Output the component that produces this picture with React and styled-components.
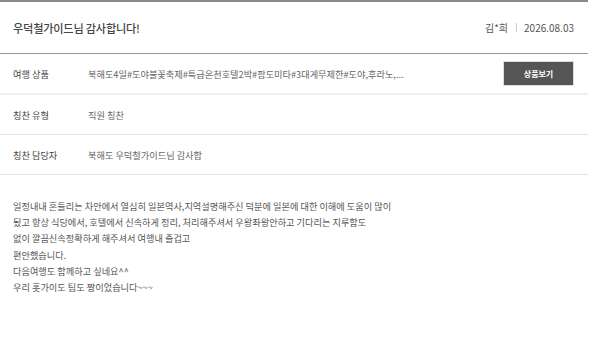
import React from "react";
import styled, { createGlobalStyle } from "styled-components";

const Global = createGlobalStyle`
  html, body { margin: 0; padding: 0; background: #fff; }
  body { font-family: "Noto Sans CJK KR", "Noto Sans", sans-serif; }
`;

const Wrap = styled.div`
  width: 588px;
  border-top: 2px solid #8a8a8a;
`;

const Header = styled.div`
  height: 51px;
  display: flex;
  align-items: center;
  justify-content: space-between;
  padding: 0 14px 0 13px;
  border-bottom: 1px solid #9a9a9a;
`;

const Title = styled.h1`
  margin: 0;
  font-size: 11.2px;
  font-weight: 500;
  color: #444;
  letter-spacing: -0.02em;
`;

const Meta = styled.div`
  display: flex;
  align-items: center;
  font-size: 10px;
  color: #555;
`;

const Sep = styled.span`
  width: 1px;
  height: 9px;
  background: #ccc;
  margin: 0 7px 0 8px;
`;

const Row = styled.div`
  height: 39px;
  display: flex;
  align-items: center;
  padding: 0 14px 0 13px;
  border-bottom: ${(p) => (p.$thick ? "2px solid #eeeeee" : "1px solid #e2e2e2")};
`;

const Label = styled.div`
  width: 75px;
  flex: none;
  font-size: 9.2px;
  color: #444;
`;

const Value = styled.div`
  flex: 1;
  font-size: 9.2px;
  color: #666;
  white-space: nowrap;
`;

const Button = styled.button`
  width: 71px;
  height: 25px;
  background: #555;
  border: 1px solid #ddd;
  color: #fff;
  font-family: inherit;
  font-size: 8px;
  font-weight: 700;
  padding: 0;
`;

const Body = styled.div`
  padding: 23px 13px;
  font-size: 9.2px;
  line-height: 16.2px;
  color: #555;
`;

const Line = styled.p`
  margin: 0;
`;

const lines = [
  "일정내내 흔들리는 차안에서 열심히 일본역사,지역설명해주신 덕분에 일본에 대한 이해에 도움이 많이",
  "됬고 항상 식당에서, 호텔에서 신속하게 정리, 처리해주셔서 우왕좌왕안하고 기다리는 지루함도",
  "없이 깔끔신속정확하게 해주셔서 여행내 즐겁고",
  "편안했습니다.",
  "다음여행도 함께하고 싶네요^^",
  "우리 홋가이도 팀도 짱이었습니다~~~",
];

export default function App() {
  return (
    <>
      <Global />
      <Wrap>
        <Header>
          <Title>우덕철가이드님 감사합니다!</Title>
          <Meta>
            <span>김*희</span>
            <Sep />
            <span>2026.08.03</span>
          </Meta>
        </Header>
        <Row $thick>
          <Label>여행 상품</Label>
          <Value>북해도4일#도야불꽃축제#특급온천호텔2박#팜도미타#3대게무제한#도야,후라노,...</Value>
          <Button>상품보기</Button>
        </Row>
        <Row>
          <Label>칭찬 유형</Label>
          <Value>직원 칭찬</Value>
        </Row>
        <Row>
          <Label>칭찬 담당자</Label>
          <Value>북해도 우덕철가이드님 감사합</Value>
        </Row>
        <Body>
          {lines.map((l, i) => (
            <Line key={i}>{l}</Line>
          ))}
        </Body>
      </Wrap>
    </>
  );
}
